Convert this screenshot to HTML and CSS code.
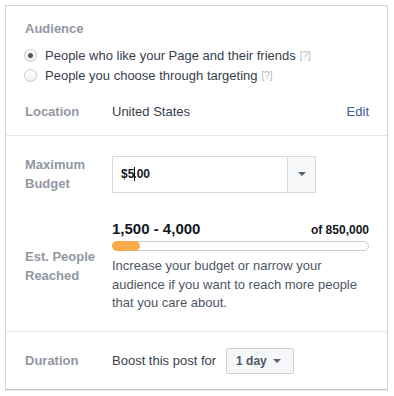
FILE: index.html
```html
<!DOCTYPE html>
<html lang="en">

<head>
    <meta charset="UTF-8">
    <title>Boost Post</title>
    <link rel="stylesheet" href="styles.css">
</head>

<body>
    <div class="panel">
        <!-- audience -->
        <div class="sec sec-audience">
            <div class="lbl">Audience</div>
            <div class="radio-row first">
                <span class="radio on"></span>
                <span>People who like your Page and their friends</span>
                <span class="help">[?]</span>
            </div>
            <div class="radio-row">
                <span class="radio"></span>
                <span>People you choose through targeting</span>
                <span class="help">[?]</span>
            </div>
            <div class="row row-loc">
                <div class="lbl">Location</div>
                <div class="val">United States</div>
                <a class="edit" href="#">Edit</a>
            </div>
        </div>

        <!-- budget -->
        <div class="sec sec-budget">
            <div class="row">
                <div class="lbl">Maximum<br>Budget</div>
                <div class="select">
                    <div class="select-text">$5<span class="caret"></span>.00</div>
                    <div class="select-btn"><span class="tri"></span></div>
                </div>
            </div>
            <div class="row row-est">
                <div class="lbl">Est. People<br>Reached</div>
                <div class="reach">
                    <div class="reach-top">
                        <span class="reach-num">1,500 - 4,000</span>
                        <span class="reach-of">of 850,000</span>
                    </div>
                    <div class="bar"><div class="bar-fill" style="width: 28px"></div></div>
                    <p class="desc">Increase your budget or narrow your audience if you want to reach more people that you care about.</p>
                </div>
            </div>
        </div>

        <!-- duration -->
        <div class="sec sec-duration">
            <div class="row">
                <div class="lbl">Duration</div>
                <div class="dur">
                    <span class="val">Boost this post for</span>
                    <button class="btn-day">1 day <span class="tri"></span></button>
                </div>
            </div>
        </div>
    </div>
</body>

</html>
```

FILE: styles.css
```css
* {
    margin: 0;
    padding: 0;
    box-sizing: border-box;
}

body {
    background: #fff;
    font-family: "Liberation Sans", Helvetica, Arial, sans-serif;
    font-size: 13px;
    color: #373e4d;
}

.panel {
    margin: 5px;
    width: 383px;
    height: 385px;
    border: 1px solid #d3d6db;
    border-bottom-color: #c5c8cd;
    box-shadow: 0 1px 0 #e5e6e9;
}

.sec {
    padding: 0 18px 0 19px;
    border-top: 1px solid #e5e5e5;
}

.sec:first-child {
    border-top: none;
}

.lbl {
    color: #9197a3;
    font-weight: bold;
    line-height: 19px;
}

.row {
    display: grid;
    grid-template-columns: 87px 1fr;
    align-items: center;
}

/* audience */
.sec-audience {
    padding-top: 14px;
    padding-bottom: 14px;
}

.sec-audience > .lbl {
    line-height: 18px;
}

.radio-row {
    display: flex;
    align-items: center;
    height: 20px;
}

.radio-row.first {
    margin-top: 7px;
}

.radio {
    width: 13px;
    height: 13px;
    border-radius: 50%;
    border: 1px solid #c6c8cc;
    background: linear-gradient(#fff, #eef0f2);
    margin: 0 8px 0 -1px;
    display: flex;
    align-items: center;
    justify-content: center;
}

.radio.on::after {
    content: "";
    width: 5px;
    height: 5px;
    border-radius: 50%;
    background: #4e5665;
}

.help {
    color: #b5b9c0;
    font-size: 10px;
    margin-left: 4px;
}

.row-loc {
    grid-template-columns: 87px 1fr auto;
    margin-top: 16px;
    height: 20px;
}

.edit {
    color: #3b5998;
    text-decoration: none;
}

/* budget */
.sec-budget {
    padding-top: 19px;
    padding-bottom: 18px;
}

.select {
    display: flex;
    width: 204px;
    height: 37px;
    border: 1px solid #d6d9de;
}

.select-text {
    flex: 1;
    display: flex;
    align-items: center;
    padding-left: 8px;
    font-size: 12px;
    font-weight: bold;
    color: #141823;
}

.caret {
    display: inline-block;
    width: 1px;
    height: 14px;
    background: #000;
    margin-right: -2px;
}

.select-btn {
    width: 28px;
    border-left: 1px solid #d6d9de;
    background: #f6f7f9;
    display: flex;
    align-items: center;
    justify-content: center;
}

.tri {
    display: inline-block;
    border-left: 4px solid transparent;
    border-right: 4px solid transparent;
    border-top: 4px solid #5a6172;
}

.row-est {
    margin-top: 26px;
}

.reach-top {
    display: flex;
    justify-content: space-between;
    align-items: baseline;
    line-height: 19px;
    color: #141823;
    font-weight: bold;
}

.reach-num {
    font-size: 15px;
}

.reach-of {
    font-size: 12px;
}

.bar {
    margin-top: 1px;
    height: 10px;
    border: 1px solid #c9ccd1;
    border-radius: 5px;
    background: #fff;
}

.bar-fill {
    height: 10px;
    margin: -1px 0 0 -1px;
    border-radius: 5px;
    background: #f7ab4a;
}

.desc {
    margin-top: 6px;
    line-height: 18.5px;
    color: #4e5665;
}

/* duration */
.sec-duration {
    padding-top: 16px;
    padding-bottom: 16px;
}

.dur {
    display: flex;
    align-items: center;
    gap: 10px;
}

.btn-day {
    font: bold 12px "Liberation Sans", Helvetica, Arial, sans-serif;
    color: #4e5665;
    height: 26px;
    width: 68px;
    border: 1px solid #cdd0d5;
    border-radius: 2px;
    background: #f6f7f9;
    text-align: left;
    padding-left: 9px;
}

.btn-day .tri {
    margin-left: 3px;
    vertical-align: 2px;
}
```
